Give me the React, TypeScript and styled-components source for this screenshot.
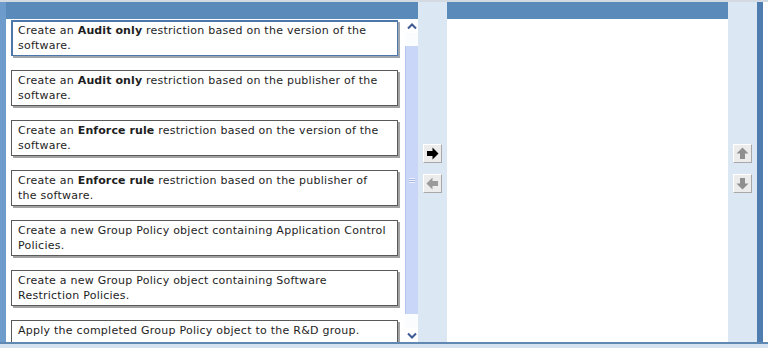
import React from 'react';
import styled, { createGlobalStyle } from 'styled-components';

const GlobalStyle = createGlobalStyle`
  html, body {
    margin: 0;
    padding: 0;
    background: #ffffff;
  }
`;

const Frame = styled.div`
  width: 768px;
  height: 348px;
  display: flex;
  flex-direction: column;
  background: #d9e4f1;
  font-family: "DejaVu Sans", Verdana, sans-serif;
  overflow: hidden;
`;

const Main = styled.div`
  display: flex;
  height: 340px;
  border-top: 2px solid #d4dae2;
  border-bottom: 2px solid #5f88b3;
  background: #ffffff;
`;

const EdgeStrip = styled.div<{ $dark?: boolean }>`
  width: 6px;
  flex: none;
  background: ${({ $dark }) => ($dark ? '#4f7db0' : '#6d9bcb')};
`;

const Spacer = styled.div`
  flex: 1;
  background: #ffffff;
`;

const Panel = styled.div<{ $width: number }>`
  width: ${({ $width }) => $width}px;
  flex: none;
  display: flex;
  flex-direction: column;
  background: #ffffff;
`;

const PanelHeader = styled.div`
  height: 17px;
  flex: none;
  background: #5a8ab9;
`;

const PanelBody = styled.div`
  flex: 1;
  display: flex;
  min-height: 0;
`;

const List = styled.div`
  width: 399px;
  flex: none;
  padding: 1px 0 0 5px;
  box-sizing: border-box;
  display: flex;
  flex-direction: column;
  gap: 14px;
  overflow: hidden;
`;

const Item = styled.div<{ $selected?: boolean }>`
  width: 387px;
  height: 36px;
  flex: none;
  box-sizing: border-box;
  padding: 2px 6px;
  font-size: 11px;
  letter-spacing: 0.25px;
  line-height: 15px;
  color: #1e1e1e;
  background: #ffffff;
  border: 1px solid ${({ $selected }) => ($selected ? '#4d76aa' : '#5a5a5a')};
  box-shadow: ${({ $selected }) =>
    $selected ? 'inset 1px 1px 0 #4d76aa, 2px 2px 0 #9fa6ae' : '2px 2px 0 #a3a3a3'};
  white-space: nowrap;
  overflow: hidden;

  b {
    font-weight: bold;
    letter-spacing: 0.1px;
  }
`;

const Scrollbar = styled.div`
  width: 13px;
  flex: none;
  display: flex;
  flex-direction: column;
  background: #f6f8fc;
`;

const ScrollButton = styled.div`
  height: 14px;
  flex: none;
  display: flex;
  align-items: center;
  justify-content: center;
  background: #ffffff;
`;

const Track = styled.div<{ $h: number }>`
  height: ${({ $h }) => $h}px;
  flex: none;
  background: #fbfcfe;
`;

const Thumb = styled.div`
  flex: 1;
  display: flex;
  align-items: center;
  justify-content: center;
  background: #c9d6f7;
  border-left: 1px solid #b6c5ee;
`;

const Grip = styled.div`
  width: 6px;
  height: 5px;
  background: repeating-linear-gradient(#eef2fc 0 1px, #a9b8e2 1px 2px);
`;

const SideColumn = styled.div`
  width: 29px;
  flex: none;
  display: flex;
  flex-direction: column;
  align-items: center;
  padding-top: 142px;
  gap: 11px;
  box-sizing: border-box;
  background: #dce7f4;
`;

const ToolButton = styled.div`
  width: 19px;
  height: 19px;
  box-sizing: border-box;
  display: flex;
  align-items: center;
  justify-content: center;
  background: #ececec;
  border-top: 1px solid #ffffff;
  border-left: 1px solid #ffffff;
  border-right: 1px solid #a8a8a8;
  border-bottom: 1px solid #a8a8a8;
`;

const BottomBand = styled.div`
  flex: 1;
  background: #d6e2f0;
`;

const Chevron = ({ down }: { down?: boolean }) => (
  <svg width="10" height="7" viewBox="0 0 10 7">
    <path
      d={down ? 'M1 1.5 L5 5.5 L9 1.5' : 'M1 5.5 L5 1.5 L9 5.5'}
      fill="none"
      stroke="#3d5a95"
      strokeWidth="2"
    />
  </svg>
);

type Dir = 'right' | 'left' | 'up' | 'down';

const Arrow = ({ dir, color }: { dir: Dir; color: string }) => {
  const rot = { right: 0, down: 90, left: 180, up: 270 }[dir];
  return (
    <svg width="13" height="13" viewBox="0 0 13 13">
      <path
        d="M1 4 H6.5 V0.5 L12.5 6.5 L6.5 12.5 V9 H1 Z"
        fill={color}
        transform={`rotate(${rot} 6.5 6.5)`}
      />
    </svg>
  );
};

const items: React.ReactNode[] = [
  <>Create an <b>Audit only</b> restriction based on the version of the<br />software.</>,
  <>Create an <b>Audit only</b> restriction based on the publisher of the<br />software.</>,
  <>Create an <b>Enforce rule</b> restriction based on the version of the<br />software.</>,
  <>Create an <b>Enforce rule</b> restriction based on the publisher of<br />the software.</>,
  <>Create a new Group Policy object containing Application Control<br />Policies.</>,
  <>Create a new Group Policy object containing Software<br />Restriction Policies.</>,
  <>Apply the completed Group Policy object to the R&amp;D group.</>,
];

export default function App() {
  return (
    <Frame>
      <GlobalStyle />
      <Main>
        <EdgeStrip />
        <Panel $width={412}>
          <PanelHeader />
          <PanelBody>
            <List>
              {items.map((content, i) => (
                <Item key={i} $selected={i === 0}>
                  {content}
                </Item>
              ))}
            </List>
            <Scrollbar>
              <ScrollButton>
                <Chevron />
              </ScrollButton>
              <Track $h={13} />
              <Thumb>
                <Grip />
              </Thumb>
              <Track $h={14} />
              <ScrollButton>
                <Chevron down />
              </ScrollButton>
            </Scrollbar>
          </PanelBody>
        </Panel>
        <SideColumn>
          <ToolButton>
            <Arrow dir="right" color="#000000" />
          </ToolButton>
          <ToolButton>
            <Arrow dir="left" color="#9a9a9a" />
          </ToolButton>
        </SideColumn>
        <Panel $width={281}>
          <PanelHeader />
          <PanelBody />
        </Panel>
        <SideColumn>
          <ToolButton>
            <Arrow dir="up" color="#8f8f8f" />
          </ToolButton>
          <ToolButton>
            <Arrow dir="down" color="#8f8f8f" />
          </ToolButton>
        </SideColumn>
        <EdgeStrip $dark />
        <Spacer />
      </Main>
      <BottomBand />
    </Frame>
  );
}
